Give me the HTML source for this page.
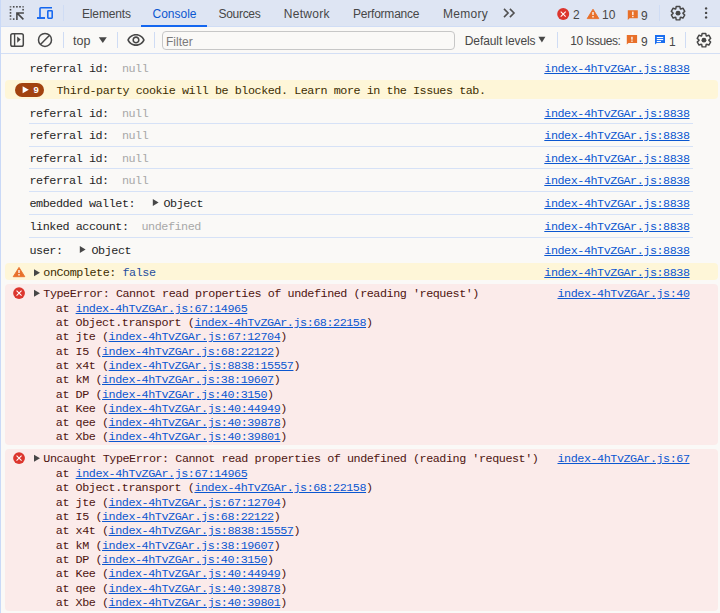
<!DOCTYPE html>
<html><head><meta charset="utf-8">
<style>
html,body{margin:0;padding:0;width:720px;height:613px;overflow:hidden;background:#faf9f7;}
body{position:relative;font-family:"Liberation Sans",sans-serif;color:#1f1f1f;}
.a{position:absolute;white-space:pre;}
.t{font-size:12px;line-height:14px;color:#474747;}
.m{font-family:"Liberation Mono",monospace;font-size:11.75px;letter-spacing:-0.45px;line-height:14px;color:#1f1f1f;}
.g{color:#a8a8a8;}
.lk{color:#0b57d0;text-decoration:underline;}
.sv{position:absolute;width:1px;background:#cfdcf4;}
.sep{position:absolute;left:29px;width:664px;height:1px;background:#d6e2f7;}
.er{color:#4e1410;}
.wr{color:#3d2d00;}
svg{position:absolute;overflow:visible;}
</style></head><body>
<!-- tab bar -->
<div class="a" style="left:0;top:0;width:720px;height:26px;background:#dee5f3;"></div>
<div class="a" style="left:0;top:26px;width:720px;height:1px;background:#d0ddf5;"></div>
<div class="a" style="left:141px;top:25px;width:66px;height:2px;background:#1366f0;"></div>
<div class="sv" style="left:63px;top:5px;height:16px;"></div>
<div class="sv" style="left:659px;top:5px;height:16px;"></div>
<div class="a t" style="left:82px;top:7px;letter-spacing:-0.15px;">Elements</div>
<div class="a t" style="left:152.5px;top:7px;color:#0b57d0;">Console</div>
<div class="a t" style="left:218.5px;top:7px;letter-spacing:-0.3px;">Sources</div>
<div class="a t" style="left:283.8px;top:7px;letter-spacing:0.3px;">Network</div>
<div class="a t" style="left:353px;top:7px;letter-spacing:-0.22px;">Performance</div>
<div class="a t" style="left:443px;top:7px;letter-spacing:0.3px;">Memory</div>
<div class="a t" style="left:573px;top:8px;font-size:12px;">2</div>
<div class="a t" style="left:602px;top:8px;font-size:12px;">10</div>
<div class="a t" style="left:641px;top:9px;font-size:12px;">9</div>

<!-- inspect icon -->
<svg style="left:0;top:0" width="720" height="27" viewBox="0 0 720 27">
  <g fill="#474747">
    <rect x="9.7" y="6" width="1.6" height="1.6" opacity=".7"/>
    <rect x="12.9" y="6" width="1.6" height="1.6"/>
    <rect x="16.1" y="6" width="1.6" height="1.6"/>
    <rect x="19.2" y="6" width="1.6" height="1.6"/>
    <rect x="22.3" y="6" width="1.6" height="1.6" opacity=".7"/>
    <rect x="9.7" y="8.9" width="1.6" height="1.6"/>
    <rect x="9.7" y="12.1" width="1.6" height="1.6"/>
    <rect x="9.7" y="15.2" width="1.6" height="1.6"/>
    <rect x="9.7" y="18.3" width="1.6" height="1.6" opacity=".7"/>
    <rect x="12.9" y="18.3" width="1.6" height="1.6"/>
    <rect x="22.3" y="8.9" width="1.6" height="1.6"/>
  </g>
  <path d="M16.9,19.9 V12.9 H23.9 M16.9,12.9 L23.4,19.4" stroke="#474747" stroke-width="1.55" fill="none"/>
  <!-- device icon -->
  <g fill="none" stroke="#1366f0" stroke-width="1.55">
    <path d="M40,17.5 V8.6 Q40,7.7 40.9,7.7 H52"/>
    <path d="M37,18 H45" stroke-width="1.9"/>
    <rect x="47.8" y="10.8" width="4.4" height="7.4" rx="0.6"/>
  </g>
<!-- chevrons -->
  <path d="M504,8.9 L508.1,13 L504,17.1 M509.9,8.9 L514,13 L509.9,17.1" stroke="#505050" stroke-width="1.6" fill="none"/>
  <!-- error circle -->
  <circle cx="563.2" cy="14.1" r="6" fill="#dc362e"/>
  <path d="M560.7,11.6 L565.7,16.6 M565.7,11.6 L560.7,16.6" stroke="#fff" stroke-width="1.05"/>
  <!-- warn triangle -->
  <path d="M593,9.2 L598.8,18.6 H587.2Z" fill="#e8702a" stroke="#e8702a" stroke-width="0.9" stroke-linejoin="round"/>
  <rect x="592.35" y="12" width="1.3" height="3" fill="#fff"/>
  <rect x="592.35" y="16" width="1.3" height="1.5" fill="#fff"/>
  <!-- issue bubble -->
  <path d="M627.8,10.3 H637.8 V18.2 H629.5 L627.8,20 Z" fill="#e8702a"/>
  <rect x="632.2" y="11.6" width="1.3" height="3.6" fill="#fff"/>
  <rect x="632.2" y="16" width="1.3" height="1.2" fill="#fff"/>
  <!-- gear -->
  <g transform="translate(670.2,5.3) scale(0.98)">
    <path d="M5.68,3.57 L6.16,1.14 L9.84,1.14 L10.32,3.57 L10.68,3.78 L13.02,2.98 L14.86,6.16 L13.00,7.79 L13.00,8.21 L14.86,9.84 L13.02,13.02 L10.68,12.22 L10.32,12.43 L9.84,14.86 L6.16,14.86 L5.68,12.43 L5.32,12.22 L2.98,13.02 L1.14,9.84 L3.00,8.21 L3.00,7.79 L1.14,6.16 L2.98,2.98 L5.32,3.78Z" fill="none" stroke="#474747" stroke-width="1.5" stroke-linejoin="round"/>
    <circle cx="8" cy="8" r="2.5" fill="#474747"/>
  </g>
  <!-- kebab -->
  <g fill="#474747">
    <circle cx="706.1" cy="8.4" r="1.2"/>
    <circle cx="706.1" cy="12.9" r="1.2"/>
    <circle cx="706.1" cy="17.4" r="1.2"/>
  </g>
</svg>

<!-- toolbar -->
<div class="a" style="left:0;top:53px;width:720px;height:1px;background:#d3dff5;"></div>
<div class="sv" style="left:63px;top:32px;height:16px;"></div>
<div class="sv" style="left:117px;top:32px;height:16px;"></div>
<div class="sv" style="left:154px;top:32px;height:16px;"></div>
<div class="sv" style="left:557px;top:32px;height:16px;"></div>
<div class="sv" style="left:685px;top:32px;height:16px;"></div>
<div class="a" style="left:162px;top:31px;width:291px;height:17px;border:1px solid #c7c7c7;border-radius:4px;background:#faf9f7;"></div>
<div class="a t" style="left:73px;top:34px;font-size:12.5px;">top</div>
<div class="a t" style="left:166px;top:35px;color:#7a7a7a;">Filter</div>
<div class="a t" style="left:464.8px;top:34px;letter-spacing:-0.1px;">Default levels</div>
<div class="a t" style="left:570.3px;top:34px;letter-spacing:-0.45px;">10 Issues:</div>
<div class="a t" style="left:641px;top:35px;font-size:12px;">9</div>
<div class="a t" style="left:669px;top:35px;font-size:12px;">1</div>
<svg style="left:0;top:0" width="720" height="54" viewBox="0 0 720 54">
  <!-- sidebar -->
  <rect x="10.8" y="33.8" width="12.5" height="12.4" rx="1.8" fill="none" stroke="#474747" stroke-width="1.5"/>
  <path d="M14.6,33.8 V46.2" stroke="#474747" stroke-width="1.4"/>
  <path d="M17.2,36.4 L20.7,39.6 L17.2,42.8Z" fill="#474747"/>
  <!-- clear -->
  <circle cx="45" cy="39.9" r="6.5" fill="none" stroke="#474747" stroke-width="1.5"/>
  <path d="M49.6,35.3 L40.4,44.5" stroke="#474747" stroke-width="1.5"/>
  <!-- triangles -->
  <path d="M98.8,37.2 H106.8 L102.8,43Z" fill="#474747"/>
  <path d="M538.4,36.8 H545.4 L541.9,42.6Z" fill="#474747"/>
  <!-- eye -->
  <path transform="translate(126.4,30.7) scale(0.8)" fill="#474747" d="M12 6c3.79 0 7.17 2.13 8.82 5.5C19.17 14.87 15.790 17 12 17s-7.17-2.13-8.82-5.5C4.83 8.130 8.21 6 12 6m0-2C7 4 2.73 7.11 1 11.5 2.73 15.89 7 19 12 19s9.27-3.11 11-7.5C21.27 7.11 17 4 12 4zm0 5c1.38 0 2.5 1.12 2.5 2.5S13.38 14 12 14s-2.5-1.12-2.5-2.5S10.62 9 12 9m0-2c-2.48 0-4.5 2.02-4.5 4.5S9.52 16 12 16s4.5-2.02 4.5-4.5S14.48 7 12 7z"/>
  <!-- issue bubble orange -->
  <path d="M626.8,35 H637.1 V42.9 H628.5 L626.8,44.6 Z" fill="#e8702a"/>
  <rect x="631.3" y="36.8" width="1.3" height="2.9" fill="#fff"/>
  <rect x="631.3" y="40.5" width="1.3" height="1.3" fill="#fff"/>
  <!-- blue bubble -->
  <path d="M655,35 H665 V42.9 H656.7 L655,44.6 Z" fill="#1a6ef0"/>
  <rect x="656.8" y="37" width="6.4" height="1.1" fill="#fff"/>
  <rect x="656.8" y="39" width="6.4" height="1.1" fill="#fff"/>
  <rect x="656.8" y="41" width="4.2" height="1.1" fill="#fff"/>
  <!-- gear 2 -->
  <g transform="translate(696.1,32.3) scale(0.98)">
    <path d="M5.68,3.57 L6.16,1.14 L9.84,1.14 L10.32,3.57 L10.68,3.78 L13.02,2.98 L14.86,6.16 L13.00,7.79 L13.00,8.21 L14.86,9.84 L13.02,13.02 L10.68,12.22 L10.32,12.43 L9.84,14.86 L6.16,14.86 L5.68,12.43 L5.32,12.22 L2.98,13.02 L1.14,9.84 L3.00,8.21 L3.00,7.79 L1.14,6.16 L2.98,2.98 L5.32,3.78Z" fill="none" stroke="#474747" stroke-width="1.5" stroke-linejoin="round"/>
    <circle cx="8" cy="8" r="2.5" fill="#474747"/>
  </g>
</svg>
<!-- left border -->
<div class="a" style="left:0;top:0;width:1px;height:613px;background:#c9d9f7;"></div>

<!-- console -->
<!--CONSOLE-->
<div class="a m " style="left:29.5px;top:62px;">referral id:</div>
<div class="a m g" style="left:121.9px;top:62px;">null</div>
<div class="a m lk" style="left:544.3px;top:62px;">index-4hTvZGAr.js:8838</div>
<div class="a" style="left:5px;top:80px;width:713px;height:19px;background:#fef6d8;border-radius:4px;"></div>
<div class="a" style="left:15px;top:83px;width:29px;height:14px;background:#a2430f;border-radius:7px;"></div>
<svg style="left:0;top:0" width="60" height="100"><path d="M22.6,86.2 L28.8,89.7 L22.6,93.2Z" fill="#fff"/></svg>
<div class="a" style="left:33.4px;top:83px;font-family:'Liberation Sans',sans-serif;font-weight:bold;font-size:9.5px;line-height:14px;color:#fff;">9</div>
<div class="a m wr" style="left:56.5px;top:84px;">Third-party cookie will be blocked. Learn more in the Issues tab.</div>
<div class="a m " style="left:29.5px;top:107px;">referral id:</div>
<div class="a m g" style="left:121.9px;top:107px;">null</div>
<div class="a m lk" style="left:544.3px;top:107px;">index-4hTvZGAr.js:8838</div>
<div class="sep" style="top:123px"></div>
<div class="a m " style="left:29.5px;top:129px;">referral id:</div>
<div class="a m g" style="left:121.9px;top:129px;">null</div>
<div class="a m lk" style="left:544.3px;top:129px;">index-4hTvZGAr.js:8838</div>
<div class="sep" style="top:146px"></div>
<div class="a m " style="left:29.5px;top:152px;">referral id:</div>
<div class="a m g" style="left:121.9px;top:152px;">null</div>
<div class="a m lk" style="left:544.3px;top:152px;">index-4hTvZGAr.js:8838</div>
<div class="sep" style="top:168px"></div>
<div class="a m " style="left:29.5px;top:174px;">referral id:</div>
<div class="a m g" style="left:121.9px;top:174px;">null</div>
<div class="a m lk" style="left:544.3px;top:174px;">index-4hTvZGAr.js:8838</div>
<div class="sep" style="top:191px"></div>
<div class="a m " style="left:29.5px;top:197px;">embedded wallet:</div>
<svg style="left:0;top:0" width="200" height="260"><path d="M152.8,199 L158.6,202.5 L152.8,206Z" fill="#474747"/><path d="M79.8,246 L85.6,249.5 L79.8,253Z" fill="#474747"/></svg>
<div class="a m " style="left:163.5px;top:197px;">Object</div>
<div class="a m lk" style="left:544.3px;top:197px;">index-4hTvZGAr.js:8838</div>
<div class="sep" style="top:214px"></div>
<div class="a m " style="left:29.5px;top:220px;">linked account:</div>
<div class="a m g" style="left:141.5px;top:220px;">undefined</div>
<div class="a m lk" style="left:544.3px;top:220px;">index-4hTvZGAr.js:8838</div>
<div class="sep" style="top:237px"></div>
<div class="a m " style="left:29.5px;top:244px;">user:</div>
<div class="a m " style="left:91.5px;top:244px;">Object</div>
<div class="a m lk" style="left:544.3px;top:244px;">index-4hTvZGAr.js:8838</div>
<div class="a" style="left:5px;top:263px;width:713px;height:17px;background:#fef6d8;border-radius:4px;"></div>
<svg style="left:0;top:0" width="60" height="300"><path d="M19,267.4 L24.8,276.7 H13.2Z" fill="#e8702a" stroke="#e8702a" stroke-width="0.9" stroke-linejoin="round"/><rect x="18.35" y="270" width="1.3" height="3" fill="#fff"/><rect x="18.35" y="274" width="1.3" height="1.5" fill="#fff"/><path d="M34,269.2 L40,272.7 L34,276.2Z" fill="#474747"/></svg>
<div class="a m wr" style="left:43.3px;top:266px;">onComplete:</div>
<div class="a m " style="left:122.49999999999999px;top:266px;color:#1f4e9e;">false</div>
<div class="a m lk" style="left:544.3px;top:266px;">index-4hTvZGAr.js:8838</div>
<div class="a" style="left:5px;top:284px;width:713px;height:161px;background:#fbebea;border-radius:4px;"></div>
<svg style="left:0;top:0" width="60" height="613"><circle cx="19.05" cy="293.05" r="5.9" fill="#dc362e"/><path d="M16.55,290.55 L21.55,295.55 M21.55,290.55 L16.55,295.55" stroke="#fff" stroke-width="1.05"/><path d="M34,289.7 L40,293.2 L34,296.7Z" fill="#474747"/></svg>
<div class="a m er" style="left:43.3px;top:287px;">TypeError: Cannot read properties of undefined (reading 'request')</div>
<div class="a m lk" style="left:557.5px;top:287px;">index-4hTvZGAr.js:40</div>
<div class="a m er" style="left:55.8px;top:302px;">at <span class="lk">index-4hTvZGAr.js:67:14965</span></div>
<div class="a m er" style="left:55.8px;top:316px;">at Object.transport (<span class="lk">index-4hTvZGAr.js:68:22158</span>)</div>
<div class="a m er" style="left:55.8px;top:330px;">at jte (<span class="lk">index-4hTvZGAr.js:67:12704</span>)</div>
<div class="a m er" style="left:55.8px;top:345px;">at I5 (<span class="lk">index-4hTvZGAr.js:68:22122</span>)</div>
<div class="a m er" style="left:55.8px;top:359px;">at x4t (<span class="lk">index-4hTvZGAr.js:8838:15557</span>)</div>
<div class="a m er" style="left:55.8px;top:373px;">at kM (<span class="lk">index-4hTvZGAr.js:38:19607</span>)</div>
<div class="a m er" style="left:55.8px;top:388px;">at DP (<span class="lk">index-4hTvZGAr.js:40:3150</span>)</div>
<div class="a m er" style="left:55.8px;top:402px;">at Kee (<span class="lk">index-4hTvZGAr.js:40:44949</span>)</div>
<div class="a m er" style="left:55.8px;top:416px;">at qee (<span class="lk">index-4hTvZGAr.js:40:39878</span>)</div>
<div class="a m er" style="left:55.8px;top:430px;">at Xbe (<span class="lk">index-4hTvZGAr.js:40:39801</span>)</div>
<div class="a" style="left:5px;top:449px;width:713px;height:162px;background:#fbebea;border-radius:4px;"></div>
<svg style="left:0;top:0" width="60" height="613"><circle cx="19.05" cy="458.05" r="5.9" fill="#dc362e"/><path d="M16.55,455.55 L21.55,460.55 M21.55,455.55 L16.55,460.55" stroke="#fff" stroke-width="1.05"/><path d="M34,454.7 L40,458.2 L34,461.7Z" fill="#474747"/></svg>
<div class="a m er" style="left:43.3px;top:452px;">Uncaught TypeError: Cannot read properties of undefined (reading 'request')</div>
<div class="a m lk" style="left:557.5px;top:452px;">index-4hTvZGAr.js:67</div>
<div class="a m er" style="left:55.8px;top:467px;">at <span class="lk">index-4hTvZGAr.js:67:14965</span></div>
<div class="a m er" style="left:55.8px;top:481px;">at Object.transport (<span class="lk">index-4hTvZGAr.js:68:22158</span>)</div>
<div class="a m er" style="left:55.8px;top:496px;">at jte (<span class="lk">index-4hTvZGAr.js:67:12704</span>)</div>
<div class="a m er" style="left:55.8px;top:510px;">at I5 (<span class="lk">index-4hTvZGAr.js:68:22122</span>)</div>
<div class="a m er" style="left:55.8px;top:524px;">at x4t (<span class="lk">index-4hTvZGAr.js:8838:15557</span>)</div>
<div class="a m er" style="left:55.8px;top:539px;">at kM (<span class="lk">index-4hTvZGAr.js:38:19607</span>)</div>
<div class="a m er" style="left:55.8px;top:553px;">at DP (<span class="lk">index-4hTvZGAr.js:40:3150</span>)</div>
<div class="a m er" style="left:55.8px;top:567px;">at Kee (<span class="lk">index-4hTvZGAr.js:40:44949</span>)</div>
<div class="a m er" style="left:55.8px;top:582px;">at qee (<span class="lk">index-4hTvZGAr.js:40:39878</span>)</div>
<div class="a m er" style="left:55.8px;top:596px;">at Xbe (<span class="lk">index-4hTvZGAr.js:40:39801</span>)</div>
<!--/CONSOLE-->
</body></html>
